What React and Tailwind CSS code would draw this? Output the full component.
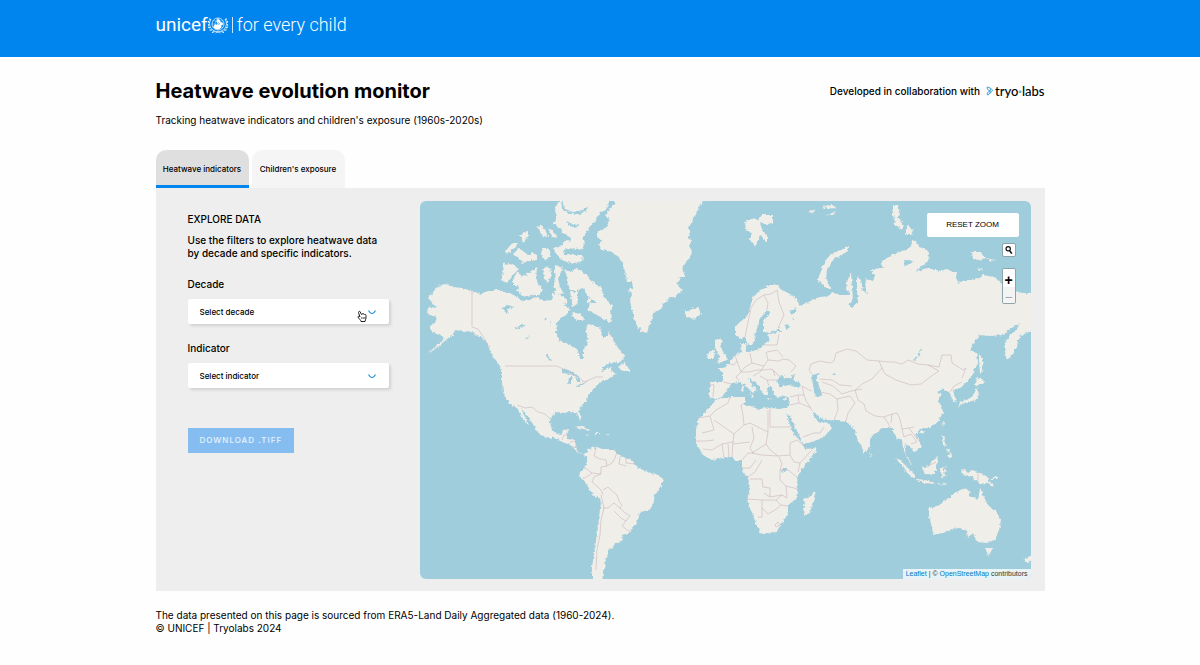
import { useState } from "react";

const LAND = [
  // Americas
  "M445 284L453 287 462 288 472 291 481 294 488 291 493 291 497 289 503 292 510 293 517 297 523 301 530 300 535 297 545 301 552 300 553 294 556 291 558 294 564 297 567 300 564 306 570 308 568 313 563 317 557 322 556 332 559 340 570 345 577 349 579 354 580 358 583 359 583 351 588 342 586 332 587 324 595 325 600 328 603 337 607 337 609 332 613 340 620 350 625 357 620 362 610 363 603 367 602 372 607 368 612 367 610 371 617 373 607 380 602 380 597 385 588 395 587 400 580 407 579 411 582 418 580 421 577 413 572 411 565 413 557 412 551 416 550 422 551 427 554 433 562 434 563 430 569 429 567 435 567 439 575 440 576 447 578 452 583 454 587 452 588 449 597 447 602 449 613 449 620 456 632 460 637 467 650 473 656 474 663 479 662 484 655 495 653 505 650 509 640 513 637 522 629 533 622 535 623 542 615 543 613 548 608 550 608 556 604 562 606 566 603 572 602 585 592 585 592 567 595 547 598 527 601 500 593 495 587 485 582 479 579 477 580 472 582 470 587 465 587 457 582 454 577 452 572 446 563 442 555 438 545 437 537 432 535 427 528 417 521 408 524 415 529 425 525 422 517 408 508 402 503 392 502 382 502 370 498 363 492 355 487 343 480 337 472 332 462 331 455 330 452 336 448 338 437 348 427 354 435 347 445 338 440 335 433 333 429 327 435 323 437 317 430 315 427 312 428 308 436 307 428 298 433 292 438 286Z",
  // Arctic archipelago
  "M503 263L515 265 518 270 510 278 507 283 501 279 503 272Z",
  "M517 272L522 276 527 274 531 271 537 268 536 277 538 283 543 290 540 295 535 295 528 297 520 294 516 291 519 287 513 285 513 280Z",
  "M505 252L512 243 518 243 513 250 507 253Z",
  "M513 253L520 248 524 252 528 255 533 253 537 255 537 260 530 260 523 263 518 258Z",
  "M520 235L528 231 528 237 523 242Z",
  "M537 225L541 226 545 229 548 237 543 237 540 231Z",
  "M548 228L553 232 558 238 552 237Z",
  "M542 248L548 248 551 257 545 260 541 255Z",
  "M553 248L562 245 565 254 574 255 583 255 582 262 573 263 565 262 558 257Z",
  "M555 208L563 195 614 195 605 210 600 213 595 221 588 230 583 237 585 243 583 250 573 248 563 250 562 243 567 240 572 241 568 236 563 233 562 230 553 223 556 217Z",
  "M543 268L550 267 552 277 547 283 544 277Z",
  "M555 265L563 268 558 278 560 288 564 293 556 296 554 285Z",
  "M565 270L571 272 577 268 587 275 590 280 602 288 603 295 613 307 610 311 612 317 610 323 606 320 602 318 597 315 588 310 590 303 597 303 591 299 587 295 583 288 577 290 570 290 567 280Z",
  "M570 292L578 292 578 303 573 307Z",
  "M573 312L580 313 585 320 577 320 572 317Z",
  "M587 298L591 299 591 304 587 303Z",
  "M618 367L625 362 630 371 623 371Z",
  // Greenland, Iceland, Svalbard
  "M619 195L610 209 605 215 609 220 607 227 597 232 597 237 602 240 599 245 602 250 612 252 620 258 623 263 625 272 627 282 633 282 633 288 628 290 632 294 630 301 632 310 635 321 638 328 642 327 640 331 647 333 649 326 652 320 653 313 660 309 667 300 675 296 683 290 679 287 677 283 681 279 677 277 685 277 682 268 688 260 692 253 689 246 692 241 688 237 690 230 688 227 692 223 693 218 697 213 698 208 708 195Z",
  "M683 308L687 312 690 310 698 307 701 313 693 320 687 317Z",
  "M745 222L753 218 758 220 762 215 773 215 773 222 767 225 760 222 762 230 767 235 767 242 760 235 755 247 750 240 752 233 746 230Z",
  "M808 212L815 209 814 213ZM822 207L832 204 836 208 828 209ZM826 215L836 212 832 216Z",
  "M848 247L840 250 830 255 823 265 818 280 825 287 832 290 826 280 827 270 833 260 848 251Z",
  "M893 205L898 205 900 213 898 217 904 225 902 230 895 225 893 215ZM907 225L913 230 911 235 905 235Z",
  "M972 252L980 252 985 258 979 260 973 259ZM987 258L995 260 990 261ZM977 268L983 270 979 271Z",
  // British Isles
  "M715 340L720 338 722 342 720 347 724 353 728 360 722 362 717 363 720 357 715 348Z",
  "M708 352L715 350 714 359 707 359Z",
  // Europe, Africa and Asia
  "M735 327L735 335 740 339 745 337 748 345 752 345 755 337 757 329 758 322 762 315 767 310 770 313 765 319 763 322 763 332 770 333 780 328 781 331 767 335 771 339 767 342 763 345 758 350 748 352 745 350 748 346 746 343 741 343 742 352 735 355 730 362 723 368 717 368 723 373 723 382 710 382 709 397 715 399 722 397 727 390 732 383 740 382 748 388 753 393 757 390 752 386 748 378 753 380 760 387 764 395 768 395 767 387 772 387 774 395 778 397 784 396 790 398 789 407 780 409 770 408 764 407 760 410 752 407 745 404 745 397 730 397 717 399 710 407 698 420 696 430 696 443 703 455 712 460 723 458 732 457 735 460 742 460 742 470 748 478 750 488 747 500 752 513 758 528 761 534 768 533 777 532 782 523 788 513 788 505 797 498 798 490 797 477 805 465 815 452 817 448 805 449 802 443 793 433 787 417 786 414 790 415 795 427 803 443 808 443 823 438 832 428 827 422 820 423 813 415 813 411 820 418 828 420 838 421 847 422 851 426 855 430 857 438 860 445 864 453 867 450 870 447 870 438 877 432 883 428 892 428 897 440 900 438 902 440 903 449 907 457 912 466 910 460 907 456 905 452 906 445 908 445 912 449 915 452 921 447 920 442 915 435 920 429 928 428 937 423 943 413 942 407 938 400 942 394 937 393 943 388 946 391 950 393 953 402 957 401 953 390 960 388 967 382 973 373 978 363 977 353 970 350 975 341 980 335 990 336 1003 335 1011 328 1020 323 1016 330 1010 335 1005 343 1005 352 1007 360 1013 354 1017 347 1018 339 1021 335 1030 332 1038 331 1038 295 1025 293 1017 292 1002 283 994 277 983 275 980 278 973 280 965 280 958 283 956 277 957 272 953 272 947 269 940 271 927 268 915 272 923 265 928 260 929 254 927 250 919 247 916 242 912 240 911 246 907 250 900 251 893 255 883 260 881 264 883 268 880 268 870 270 875 276 873 281 866 279 865 287 868 293 863 292 861 280 857 277 857 290 858 302 853 307 848 305 853 301 852 285 851 272 847 282 846 288 850 295 840 295 833 292 828 296 820 297 812 300 803 305 797 306 796 311 792 315 788 312 794 309 799 305 798 300 790 294 780 289 778 285 770 285 760 291 753 297 750 307 747 317 740 322Z",
  // Mediterranean islands
  "M742 386L744 386 743 392 741 391ZM749 394L754 395 753 398ZM767 398L772 399 768 400ZM783 399L787 398 785 401Z",
  // East Asia
  "M979 353L982 358 984 363 981 368 983 372 980 373 979 363Z",
  "M978 377L985 381 983 384 979 384 976 387 975 383Z",
  "M977 388L979 393 978 398 972 401 967 402 962 404 958 408 960 402 968 399 972 397 975 392Z",
  "M942 423L944 422 943 427ZM920 431L924 431 922 434ZM869 452L872 456 870 457Z",
  "M942 435L945 437 944 442 947 446 943 445ZM946 448L950 450 949 453ZM947 456L951 452 952 457 949 457Z",
  // Indonesia and New Guinea
  "M896 458L900 460 905 465 911 471 915 475 915 479 911 477 905 470Z",
  "M916 479L925 480 935 483 934 484 924 483 917 481ZM937 483L942 484 948 483 946 485 938 484Z",
  "M922 467L926 468 932 462 937 456 939 460 936 466 936 470 933 475 925 474Z",
  "M940 468L947 466 943 469 946 471 944 473 947 477 944 476 942 478 941 473Z",
  "M961 469L965 470 968 473 972 470 978 472 984 475 987 477 990 482 995 487 991 486 987 483 980 484 977 481 974 480 971 476 963 474ZM990 479L998 476 996 479Z",
  // Australia, Tasmania, New Zealand
  "M929 508L940 505 945 500 950 497 955 493 962 489 970 490 969 496 978 500 979 494 980 488 983 495 988 505 997 512 1001 522 999 530 995 540 987 543 977 542 973 533 968 537 967 531 960 528 953 529 943 533 933 535 932 527 929 517Z",
  "M985 548L992 548 991 553 988 555ZM1034 553L1024 560 1028 563 1034 560Z",
  // Madagascar
  "M814 491L815 497 812 505 810 513 804 515 803 509 805 504 804 499 810 496Z",
  // Caribbean
  "M575 427L580 426 586 428 592 431 589 431 583 429ZM595 432L599 432 602 434 596 434ZM586 434L589 435 587 436ZM606 434L609 434 607 435Z",
];

const WATER = [
  "M777 383L779 378 782 375 785 378 790 378 795 374 793 380 800 383 801 387 795 387 789 385 780 387Z",
  "M812 375L820 373 816 379 818 383 822 395 818 397 815 396 813 385Z",
  "M832 374L836 373 835 376Z",
  "M783 468L787 468 786 472 782 472Z",
  "M913 360L917 356 921 348 922 349 919 356 915 360Z",
  "M562 370L567 369 574 373 579 376 577 377 570 374 562 373Z",
  "M568 384L569 377 573 377 571 380 571 385Z",
  "M575 377L579 378 581 382 577 382Z",
  "M576 386L582 383 588 381 584 384 577 387Z",
  "M502 308L508 305 514 307 508 309 507 313 504 311Z",
  "M516 328L522 324 526 325 521 328 516 330Z",
  "M545 354L548 354 552 361 549 360Z",
  "M784 326L788 324 790 327 787 329Z",
  "M792 317L794 318 794 322Z",
  "M525 338L531 336 526 339ZM544 318L547 318 545 321ZM550 322L553 325 550 324Z",
  "M903 262L909 260 914 261 910 264 904 266Z",
  "M561 195L565 209 573 212 580 211 588 206 587 211 580 214 570 214 562 209Z",
  "M567 221L574 225 580 224 576 228 568 225Z",
];

const BORDERS = [
  // Americas
  "M472 291V327L478 329 484 338 488 345",
  "M505 366H557L567 371 578 377 584 382 596 377 603 377",
  "M517 405L525 408 532 407 538 412 545 414 550 419",
  "M562 440L564 435 567 435M570 442L575 441M573 447L577 447M583 455L584 452",
  "M596 448L594 456 600 459 606 460 607 466 601 467 601 474 592 473 584 467M607 466L612 463 615 458 617 452M620 457L619 464 626 466M626 458L626 463 636 464",
  "M592 473L585 478 582 478M601 474L594 477 592 482 598 487 601 490 603 495M603 490L608 487 611 490 617 495 619 501 622 505 620 508 614 503 608 508 603 508",
  "M601 495L604 508 601 520 600 535 597 550 596 570M620 508L624 512 630 516 626 521 621 518 614 511M626 521L622 526 630 532",
  // Africa
  "M730 397L728 403 716 410 710 416 698 418M710 416L714 430 702 433M714 420L734 434 744 425 743 415 741 405 745 403",
  "M744 425L750 423 768 432 768 410M770 408V427H793M768 432L766 444 752 453 M752 427L754 438 750 448 754 454",
  "M734 434L733 442 722 444 712 450 703 449M696 441L706 441 714 440M722 444L724 458M728 444L729 457M733 442L732 457M733 444L750 442",
  "M766 444L770 450 778 456 790 455 790 443 797 440 804 446M790 455L794 462 800 463 812 450M800 463L798 472",
  "M742 460L748 453 752 453 762 455 778 456M742 468L750 468 756 460M748 477L755 472 762 460M750 479L762 479 763 487 770 488 770 497",
  "M779 457L782 464 780 470 788 470 797 477M780 470L780 480 786 486 798 489M786 486L787 498 782 495 770 497 764 493",
  "M747 499L762 500 776 500 782 495M762 500V517H758M762 508L768 514 775 510 781 505 788 506M776 500L781 505M775 525L778 522 780 525 776 527Z",
  // Europe and Middle East
  "M745 337L748 322 751 308 756 300 764 295 771 294 777 290M764 295L768 303 767 310M777 290L779 302 784 315 778 328",
  "M735 355L737 361 734 365 730 364M737 361L741 372 736 377M750 353L752 363 745 367 741 372 749 372 757 370M752 363L764 366 768 360 766 352",
  "M757 370L764 370 772 369 780 377M764 366L760 372 753 376M760 376L767 380 769 386M767 380L778 380M768 360L779 361 783 359 789 360 796 366 791 372M767 352L777 350 783 357M765 345L777 345 779 334",
  "M710 384L714 385 713 397M723 382L732 384M736 377L739 381M773 370L775 376",
  "M790 397L798 395 804 395 802 386 809 390 812 391M798 395L799 403 809 407 813 411M790 405L799 403M804 395L806 401 811 408M803 437L814 433 820 433 824 427",
  // Asia
  "M812 374L809 370 811 364 820 361 830 363 834 361 836 353 847 349 856 351 867 360 879 361 882 368",
  "M879 361L888 362 894 362 902 364 908 360 918 364 928 365 939 367 942 355 951 355 952 363 963 370 966 368 962 378",
  "M882 368L885 374 896 380 911 385 921 384 930 377 939 371 928 365M882 368L872 379 862 384 855 390",
  "M820 392L830 394 837 399 838 410 834 420M822 382L833 386 842 394 851 391 862 389M837 399L850 396 855 403 848 413 846 421M820 379L832 380 840 385 852 386",
  "M855 390L858 400 864 404 866 411 875 416 884 417 892 414 897 413 900 419 902 429 909 428 914 427M884 417L888 423 891 429M892 414L891 423M902 429L904 437 911 434 917 442 911 444M909 428L915 436 920 442M904 448L906 443",
  "M950 392L954 386 962 382M928 466L936 462M978 472V484",
];

function UnicefMark() {
  return (
    <svg viewBox="0 0 40 36" className="h-[18px] w-5" fill="none" stroke="currentColor" aria-hidden="true">
      <circle cx="20" cy="16" r="12" strokeWidth="1.4" />
      <path d="M8 16h24M20 4v24M10 9q10 6 20 0M10 23q10-6 20 0M20 4q-12 12 0 24M20 4q12 12 0 24" strokeWidth=".7" />
      <path
        d="M18 7c4-2 7 1 6 5l5 1c2 4 0 6-2 5l-1 6c-3 3-7 3-10 2-3 0-6-3-5-6l4-4 2 2 3-3c-3-3-4-5-2-8z"
        fill="currentColor"
        stroke="none"
      />
      <path d="M20 13l3 2-2 3" stroke="#0083ee" strokeWidth="1.2" />
      <path d="M6 6C1 13 2 25 13 30c5 2 8 1 12 4M34 6c5 7 4 19-7 24-5 2-8 1-12 4" strokeWidth="1.5" />
      <path
        d="M5 9L3 5M3 14L0 10M2 19L-1 16M4 24L0 22M8 28L3 28M13 31L8 33M35 9l2-4M37 14l3-4M38 19l3-3M36 24l4-2M32 28l5 0M27 31l5 2"
        strokeWidth="2.2"
      />
    </svg>
  );
}

function TryolabsMark() {
  return (
    <svg viewBox="0 0 16 20" className="h-[10px] w-2" fill="none" stroke="#4aa9d6" strokeWidth="2" aria-hidden="true">
      <path d="M2 2l5 1 6 5-1 3-8 7-2-1 1-4 5-3-5-3z" />
      <circle cx="8" cy="10" r="1.5" />
      <path d="M7 3l3 5M4 18l5-6" />
    </svg>
  );
}

function HandPointer() {
  return (
    <svg viewBox="0 0 20 24" className="h-3 w-[10px]" fill="#fff" stroke="#222" strokeWidth="2" strokeLinejoin="round" aria-hidden="true">
      <path d="M6 14L3 5a2 2 0 0 1 3-2L9 9a2 2 0 0 1 3-1 2 2 0 0 1 3 1 2 2 0 0 1 3 2V16c0 3-2 4-2 7H8c0-3-5-6-6-9 0-2 2-2 4 0z" />
      <path d="M9.500 14v4M12.500 14v4M15.500 14v4" strokeWidth="1.300" />
    </svg>
  );
}

function SelectField({ id, label, placeholder, options, children }) {
  const [value, setValue] = useState("");

  return (
    <div>
      <label htmlFor={id} className="block text-[10px] leading-4 font-medium">
        {label}
      </label>
      <div className="relative mt-[7px]">
        <select
          id={id}
          value={value}
          onChange={(event) => setValue(event.target.value)}
          className="block h-[25px] w-full cursor-pointer appearance-none rounded-xs bg-white px-3 text-[8px] font-medium shadow-[2px_2px_3px_rgba(0,0,0,0.12)] outline-none"
        >
          <option value="">{placeholder}</option>
          {options.map((option) => (
            <option key={option} value={option}>
              {option}
            </option>
          ))}
        </select>
        <svg
          viewBox="0 0 8 5"
          className="pointer-events-none absolute top-[11px] right-[13px] h-[5px] w-2"
          fill="none"
          stroke="#1c8fdc"
          strokeWidth="1.2"
          aria-hidden="true"
        >
          <path d="M.5.5Q4 7 7.500.5" />
        </svg>
        {children}
      </div>
    </div>
  );
}

function WorldMap() {
  return (
    <svg viewBox="420 201 611 378" preserveAspectRatio="xMidYMid slice" className="block h-full w-full" role="img" aria-label="World map">
      <defs>
        <filter id="coast" x="0" y="0" width="100%" height="100%">
          <feTurbulence type="fractalNoise" baseFrequency="0.35" numOctaves="2" seed="4" />
          <feDisplacementMap in="SourceGraphic" scale="4" xChannelSelector="R" yChannelSelector="G" />
        </filter>
      </defs>
      <g filter="url(#coast)">
        <rect x="410" y="190" width="640" height="400" fill="#a0cddc" />
        <path d={LAND.join("")} fill="#f0eee8" />
        <path d={WATER.join("")} fill="#a0cddc" />
      </g>
      <path d={BORDERS.join("")} fill="none" stroke="#c9b5c1" strokeWidth="0.6" strokeLinejoin="round" />
    </svg>
  );
}

const TABS = ["Heatwave indicators", "Children's exposure"];

export default function App() {
  const [activeTab, setActiveTab] = useState(TABS[0]);

  return (
    <div className="min-h-screen bg-[#fefefe] font-['Inter',sans-serif] text-black">
      <header className="bg-[#0084ee] text-white">
        <div className="mx-auto flex h-[57px] max-w-[889px] items-start pt-[13px]">
          <a href="#home" className="flex items-center font-['Roboto',sans-serif] leading-6">
            <span className="text-[19px]">unicef</span>
            <UnicefMark />
            <span className="mx-1 h-4 w-px bg-white/80" />
            <span className="text-[18px] font-light">for every child</span>
          </a>
        </div>
      </header>

      <main className="mx-auto max-w-[889px] pt-5">
        <div className="flex items-center justify-between">
          <h1 className="text-[20px] leading-7 font-bold">Heatwave evolution monitor</h1>
          <p className="flex items-center text-[10px] font-medium">
            Developed in collaboration with
            <a href="#tryolabs" className="ml-[6px] flex items-center font-['Lato',sans-serif] text-[13px] leading-4">
              <TryolabsMark />
              <span className="ml-px">
                tryo<span className="font-bold text-[#4aa9d6]">·</span>labs
              </span>
            </a>
          </p>
        </div>
        <p className="mt-[7px] text-[10px] leading-4">
          Tracking heatwave indicators and children's exposure (1960s-2020s)
        </p>

        <div role="tablist" className="mt-[22px] flex gap-[3px]">
          {TABS.map((tab) => (
            <button
              key={tab}
              type="button"
              role="tab"
              aria-selected={activeTab === tab}
              onClick={() => setActiveTab(tab)}
              className={
                activeTab === tab
                  ? "h-[38px] w-[93px] rounded-t-[10px] border-b-[3px] border-[#0084ee] bg-[#dfdfdf] pt-[2px] text-[8px] font-medium whitespace-nowrap"
                  : "h-[38px] w-[93px] rounded-t-[10px] border-b-[3px] border-transparent bg-[#f5f5f5] pt-[2px] text-[8px] font-medium whitespace-nowrap"
              }
            >
              {tab}
            </button>
          ))}
        </div>

        <section className="flex bg-[#eeeeee] pt-[13px] pr-[14px] pb-3 pl-8">
          <div className="w-[201px] shrink-0 pt-[10px]">
            <h2 className="text-[10px] leading-4 font-medium">EXPLORE DATA</h2>
            <p className="mt-[7px] text-[10px] leading-[13px] font-medium">
              Use the filters to explore heatwave data by decade and specific indicators.
            </p>
            <div className="mt-4 space-y-4">
              <SelectField
                id="decade"
                label="Decade"
                placeholder="Select decade"
                options={["1960s", "1970s", "1980s", "1990s", "2000s", "2010s", "2020s"]}
              >
                <span className="pointer-events-none absolute top-[11px] right-[22px]">
                  <HandPointer />
                </span>
              </SelectField>
              <SelectField
                id="indicator"
                label="Indicator"
                placeholder="Select indicator"
                options={["Frequency", "Duration", "Severity"]}
              />
            </div>
            <button
              type="button"
              className="mt-10 h-[25px] bg-[#86bdf0] px-3 pb-[2px] text-[8px] font-medium tracking-[1px] whitespace-nowrap text-white/80"
            >
              DOWNLOAD .TIFF
            </button>
          </div>

          <div className="relative ml-[31px] h-[378px] flex-1 overflow-hidden rounded-md">
            <WorldMap />
            <div className="absolute top-3 right-3 flex flex-col items-end">
              <button type="button" className="h-6 w-[92px] rounded-xs bg-white font-['Liberation_Sans',sans-serif] text-[8px]">
                RESET ZOOM
              </button>
              <div className="mt-[6px] mr-[3px] flex flex-col gap-[11px]">
                <button
                  type="button"
                  aria-label="Search"
                  className="flex h-[14px] w-[14px] items-center justify-center rounded-xs border border-[#8fa3aa] bg-white"
                >
                  <svg viewBox="0 0 10 10" className="h-2 w-2" fill="none" stroke="#111" strokeWidth="1.500" aria-hidden="true">
                    <circle cx="4" cy="3.500" r="2.700" />
                    <path d="M5.800 5.800L8.500 9.500" strokeWidth="2" />
                  </svg>
                </button>
                <div className="overflow-hidden rounded-xs border border-[#8fa3aa] font-['Liberation_Sans',sans-serif] text-[14px] leading-none">
                  <button type="button" aria-label="Zoom in" className="flex h-[18px] w-3 items-center justify-center bg-white pt-1 font-bold">
                    +
                  </button>
                  <button type="button" aria-label="Zoom out" className="flex h-4 w-3 items-center justify-center bg-[#f4f4f4] pt-1 text-[#aaa]">
                    −
                  </button>
                </div>
              </div>
            </div>
            <p className="absolute right-0 bottom-0 bg-white/75 px-[3px] font-['Liberation_Sans',sans-serif] text-[7px] leading-[10px] text-[#333]">
              <a href="#leaflet" className="text-[#0078c8]">Leaflet</a> | ©{" "}
              <a href="#osm" className="text-[#0078c8]">OpenStreetMap</a> contributors
            </p>
          </div>
        </section>

        <footer className="mt-[18px] text-[10px] leading-[13px]">
          <p>The data presented on this page is sourced from ERA5-Land Daily Aggregated data (1960-2024).</p>
          <p>© UNICEF | Tryolabs 2024</p>
        </footer>
      </main>
    </div>
  );
}
